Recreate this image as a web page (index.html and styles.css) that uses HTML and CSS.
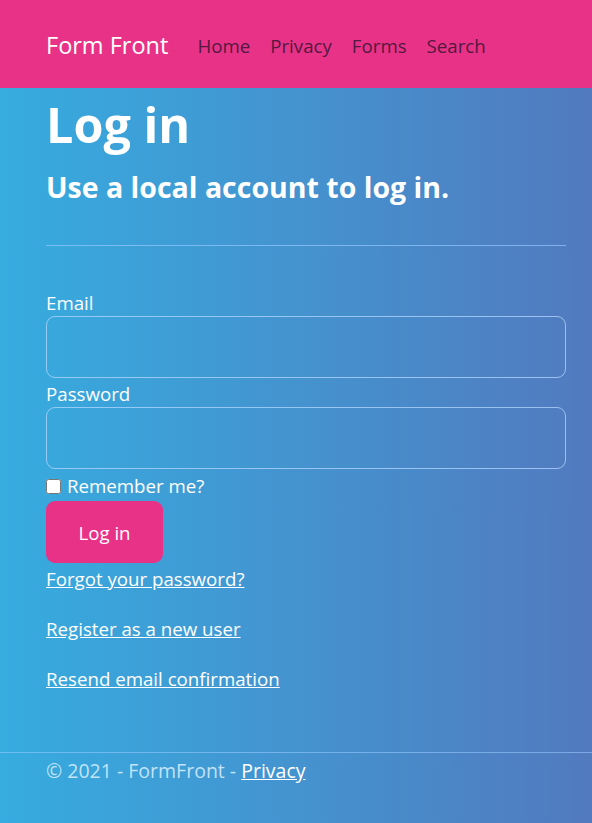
FILE: index.html
```html
<!DOCTYPE html>
<html lang="en">
<head>
<meta charset="utf-8">
<title>Log in - FormFront</title>
<link rel="stylesheet" href="styles.css">
</head>
<body>
<header class="navbar">
  <div class="nav-inner">
    <a class="brand" href="#">Form Front</a>
    <nav class="nav-links">
      <a href="#">Home</a>
      <a href="#">Privacy</a>
      <a href="#">Forms</a>
      <a href="#">Search</a>
    </nav>
  </div>
</header>
<main class="container">
  <h1 class="title">Log in</h1>
  <h2 class="subtitle">Use a local account to log in.</h2>
  <hr class="rule">
  <form class="login-form">
    <div class="field">
      <label for="email">Email</label>
      <input id="email" type="email" class="input">
    </div>
    <div class="field">
      <label for="password">Password</label>
      <input id="password" type="password" class="input">
    </div>
    <label class="check"><input type="checkbox" class="checkbox"> Remember me?</label>
    <button type="button" class="btn">Log in</button>
    <p class="link-row"><a href="#">Forgot your password?</a></p>
    <p class="link-row"><a href="#">Register as a new user</a></p>
    <p class="link-row"><a href="#">Resend email confirmation</a></p>
  </form>
</main>
<footer class="footer">
  <div class="footer-inner">© 2021 - FormFront - <a href="#">Privacy</a></div>
</footer>
</body>
</html>
```
FILE: styles.css
```css
* { box-sizing: border-box; }
html, body { margin: 0; padding: 0; }
body {
  font-family: "Open Sans", "Noto Sans", sans-serif;
  color: #fff;
  background: linear-gradient(to right, #36acdf 0%, #527abf 100%);
  min-height: 823px;
  font-size: 18.7px;
}
a { color: #fff; }
.navbar {
  background: #e83288;
  height: 88px;
}
.nav-inner {
  padding: 2px 46px 0;
  height: 88px;
  display: flex;
  align-items: center;
}
.brand {
  color: #fff;
  text-decoration: none;
  font-size: 23.5px;
  margin-right: 29px;
}
.nav-links { display: flex; gap: 20px; }
.nav-links a {
  color: #54193f;
  text-decoration: none;
  font-size: 18.7px;
}
.container {
  padding: 0 26px 0 46px;
}
.title {
  margin: 6px 0 0;
  font-size: 48.5px;
  font-weight: 700;
  line-height: 60px;
}
.subtitle {
  margin: 13px 0 0;
  font-size: 28.5px;
  font-weight: 700;
  line-height: 40px;
}
.rule {
  border: 0;
  border-top: 1px solid rgba(150, 200, 255, 0.7);
  margin: 38px 0 43px;
}
.login-form { display: flex; flex-direction: column; align-items: flex-start; }
.field { width: 100%; display: flex; flex-direction: column; }
.field label { line-height: 27px; }
.input {
  width: 100%;
  height: 62px;
  border: 1px solid rgba(180, 215, 255, 0.75);
  border-radius: 9px;
  background: transparent;
  margin-bottom: 2px;
}
.check { display: flex; align-items: center; line-height: 30px; }
.checkbox { margin: 0 6px 0 0; width: 15px; height: 15px; }
.btn {
  background: #e83288;
  color: #fff;
  border: 0;
  border-radius: 9px;
  width: 117px;
  height: 62px;
  font-family: inherit;
  font-size: 18.7px;
}
.link-row { margin: 4px 0 22px; line-height: 24px; }
.footer {
  margin-top: 39px;
  border-top: 1px solid rgba(150, 200, 255, 0.6);
}
.footer-inner {
  padding: 4px 46px;
  color: rgba(220, 240, 255, 0.85);
  line-height: 28px;
  font-size: 19.5px;
}
```
